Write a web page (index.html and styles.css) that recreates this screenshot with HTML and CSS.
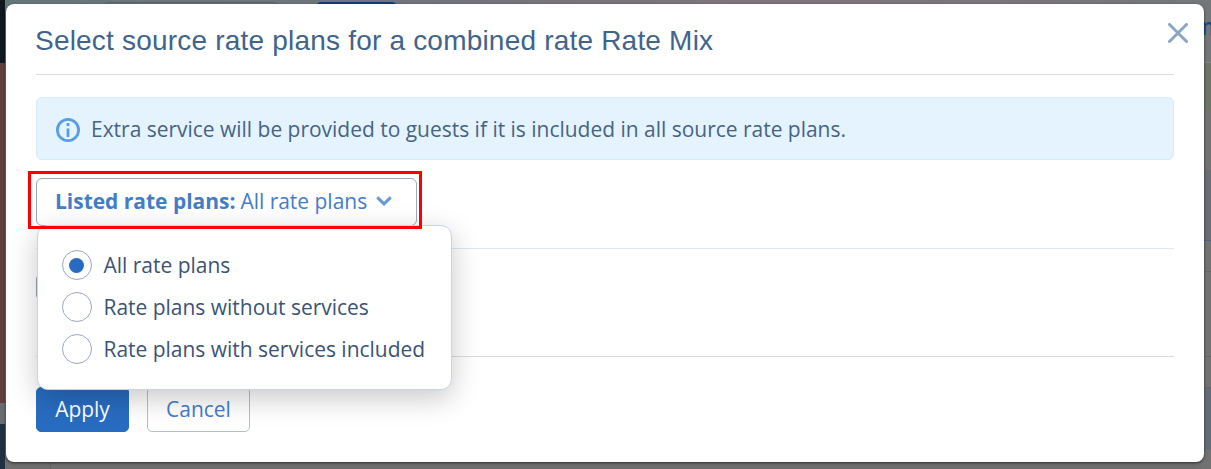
FILE: index.html
```html
<!DOCTYPE html>
<html lang="en">
<head>
    <meta charset="UTF-8">
    <meta name="viewport" content="width=device-width, initial-scale=1.0">
    <title>Rate Mix</title>
    <link rel="stylesheet" href="styles.css">
</head>
<body>
    <div class="page">
        <div class="page-rail">
            <div class="rail-top"></div>
            <div class="rail-menu"></div>
            <div class="rail-gap"></div>
            <div class="rail-bottom"></div>
        </div>
        <div class="page-main">
            <div class="page-toolbar">
                <div class="toolbar-field"></div>
                <div class="toolbar-btn"></div>
            </div>
            <div class="page-panel"></div>
        </div>
        <div class="page-side">
            <div class="side-head">m</div>
            <div class="side-green"></div>
            <div class="side-grey"></div>
            <div class="side-blue"></div>
            <div class="side-row"></div>
            <div class="side-row side-row-tall"></div>
            <div class="side-row"></div>
            <div class="side-selected"></div>
            <div class="side-end"></div>
        </div>
    </div>

    <div class="modal">
        <div class="modal-header">
            <h1>Select source rate plans for a combined rate Rate Mix</h1>
            <button class="close-btn" aria-label="Close">
                <svg width="20" height="20" viewBox="0 0 20 20"><path d="M1.5 1.5L18.5 18.5M18.5 1.5L1.5 18.5"/></svg>
            </button>
        </div>

        <div class="alert">
            <svg class="alert-icon" width="24" height="24" viewBox="0 0 24 24">
                <circle cx="12" cy="12" r="10.6"/>
                <path d="M12 5V8M12 10.5V19"/>
            </svg>
            <p>Extra service will be provided to guests if it is included in all source rate plans.</p>
        </div>

        <div class="filter">
            <button class="filter-btn">
                <b>Listed rate plans:</b>
                <span>All rate plans</span>
                <svg width="16" height="10" viewBox="0 0 16 10"><path d="M1.3 1.3L8 7.8L14.7 1.3"/></svg>
            </button>
            <div class="filter-highlight"></div>
            <div class="filter-menu">
                <label class="option"><span class="radio checked"></span><span class="option-text">All rate plans</span></label>
                <label class="option"><span class="radio"></span><span class="option-text">Rate plans without services</span></label>
                <label class="option"><span class="radio"></span><span class="option-text">Rate plans with services included</span></label>
            </div>
        </div>

        <div class="plans">
            <span class="checkbox"></span>
        </div>

        <div class="modal-footer">
            <button class="btn btn-primary">Apply</button>
            <button class="btn btn-default">Cancel</button>
        </div>
    </div>
</body>
</html>
```

FILE: styles.css
```css
* {
    box-sizing: border-box;
}
body {
    margin: 0;
    height: 469px;
    overflow: hidden;
    font-family: 'Open Sans', 'Noto Sans', sans-serif;
    font-size: 20.96px;
    color: #3b5375;
    background-color: #6e6e6e;
}
button {
    font: inherit;
    cursor: pointer;
}

/* Dimmed page behind the dialog */
.page {
    display: grid;
    grid-template-columns: 5px 1fr 10px;
    height: 469px;
}
.page-rail {
    display: flex;
    flex-direction: column;
}
.rail-top {
    height: 63px;
    background-color: #0f171f;
}
.rail-menu {
    height: 340px;
    background-color: #613f3e;
}
.rail-gap {
    height: 21px;
    background-color: #686e70;
}
.rail-bottom {
    flex: 1;
    background-color: #1f3042;
}
.page-main {
    display: flex;
    flex-direction: column;
}
.page-toolbar {
    display: flex;
    gap: 37px;
    height: 63px;
    padding: 2px 0 0 98px;
    background: linear-gradient(to right, #66767a, #73747c 35%, #7f747b 65%, #74777b);
}
.toolbar-field {
    width: 176px;
    height: 40px;
    border: 1px solid #5b636b;
    border-radius: 6px;
}
.toolbar-btn {
    width: 81px;
    height: 40px;
    border-radius: 5px;
    background-color: #123d78;
}
.page-panel {
    flex: 1;
    margin-left: 45px;
    border-left: 1px solid #626467;
}
.page-side {
    display: flex;
    flex-direction: column;
    overflow: hidden;
    background-color: #727272;
}
.side-head {
    height: 63px;
    padding-top: 10px;
    font-size: 23px;
    line-height: 32px;
    font-weight: 600;
    color: #164887;
    background-color: #74777a;
    border-bottom: 1px solid #818486;
}
.side-green {
    height: 47px;
    background-color: #6d7469;
}
.side-grey {
    height: 60px;
    background-color: #727272;
}
.side-blue {
    height: 71px;
    background-color: #686e74;
    border-bottom: 1px solid #4a6587;
}
.side-row {
    height: 31px;
    border-bottom: 1px solid #62676c;
}
.side-row-tall {
    height: 85px;
}
.side-selected {
    height: 62px;
    background-color: #636c74;
}
.side-end {
    flex: 1;
}

/* Dialog */
.modal {
    position: absolute;
    left: 6px;
    top: 4px;
    width: 1198px;
    height: 458px;
    padding: 0 30px;
    background-color: #fff;
    border-radius: 8px;
    box-shadow: 0 1px 3px rgba(0,0,0,0.6);
}
.modal-header {
    position: relative;
    height: 71px;
    border-bottom: 1px solid #dadcde;
}
.modal-header h1 {
    margin: 0 0 0 -1px;
    padding-top: 17px;
    font-family: 'Liberation Sans', Arial, sans-serif;
    font-size: 28px;
    line-height: 40px;
    font-weight: 400;
    letter-spacing: 0.2px;
    color: #41648a;
    white-space: nowrap;
}
.close-btn {
    position: absolute;
    right: -14px;
    top: 19px;
    width: 20px;
    height: 20px;
    padding: 0;
    border: none;
    background: none;
}
.close-btn svg {
    display: block;
}
.close-btn path {
    fill: none;
    stroke: #8ca6c2;
    stroke-width: 3;
    stroke-linecap: round;
}
.alert {
    display: flex;
    align-items: center;
    gap: 11px;
    height: 63px;
    margin-top: 22px;
    padding: 2px 19px 0;
    background-color: #e5f3ff;
    border: 1px solid #d7eafc;
    border-radius: 6px;
}
.alert p {
    margin: 0 0 2px;
    color: #456484;
    white-space: nowrap;
}
.alert-icon {
    fill: none;
    stroke: #5a9edd;
    stroke-width: 2.8;
}
.filter {
    position: relative;
    width: 381px;
    height: 48px;
    margin-top: 18px;
}
.filter-btn {
    display: flex;
    align-items: center;
    width: 381px;
    height: 48px;
    padding: 0 18px 2px;
    color: #427dc8;
    background-color: #fff;
    border: 1px solid #9aa8ba;
    border-radius: 6px;
    white-space: nowrap;
}
.filter-btn span {
    margin-left: 5px;
}
.filter-btn svg {
    margin-left: 9px;
}
.filter-btn path {
    fill: none;
    stroke: #6399da;
    stroke-width: 3;
}
.filter-highlight {
    position: absolute;
    z-index: 3;
    left: -8px;
    top: -7px;
    width: 394px;
    height: 58px;
    border: 3px solid #f00;
}
.filter-menu {
    position: absolute;
    z-index: 2;
    left: 1px;
    top: 47px;
    width: 415px;
    height: 165px;
    padding: 18px 24px;
    background-color: #fff;
    border: 1px solid #c5d6ec;
    border-radius: 11px;
    box-shadow: 0 8px 28px rgba(0,0,0,0.22);
}
.option {
    display: flex;
    align-items: center;
    gap: 11.5px;
    height: 42px;
    white-space: nowrap;
}
.radio {
    display: flex;
    align-items: center;
    justify-content: center;
    width: 30px;
    height: 30px;
    border: 1px solid #9ba8bc;
    border-radius: 50%;
}
.radio.checked::before {
    content: '';
    width: 15px;
    height: 15px;
    margin: 1px 1px 0 0;
    border-radius: 50%;
    background-color: #286cc1;
}
.plans {
    height: 109px;
    margin-top: 22px;
    padding-top: 25px;
    border-top: 1px solid #dce7f0;
    border-bottom: 1px solid #dadbdd;
}
.checkbox {
    display: block;
    width: 26px;
    height: 26px;
    border: 1px solid #9aa8ba;
    border-radius: 5px;
}
.modal-footer {
    display: flex;
    gap: 18px;
    padding-top: 30px;
}
.btn {
    height: 45px;
    padding: 0 18px 2px;
    border-radius: 5px;
}
.btn-primary {
    width: 93px;
    color: #fff;
    background-color: #286cc1;
    border: 1px solid #286cc1;
}
.btn-default {
    width: 103px;
    color: #427dc8;
    background-color: #fff;
    border: 1px solid #b1bfd1;
}
```
